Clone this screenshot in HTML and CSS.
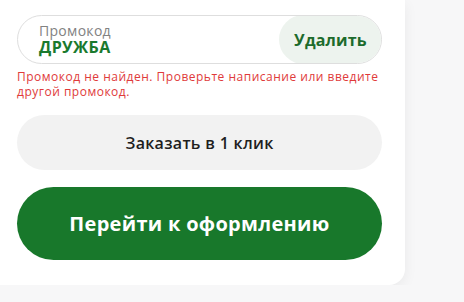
FILE: index.html
```html
<!DOCTYPE html>
<html lang="ru">
  <head>
    <meta charset="UTF-8" />
    <meta name="viewport" content="width=device-width, initial-scale=1.0" />
    <title>Корзина</title>
    <link rel="stylesheet" href="styles.css">
  </head>
  <body>
    <div class="cart-summary">
      <div class="promo">
        <div class="promo-field">
          <span class="promo-label">Промокод</span>
          <span class="promo-value">ДРУЖБА</span>
        </div>
        <button class="promo-remove" type="button">Удалить</button>
      </div>
      <p class="promo-error">Промокод не найден. Проверьте написание или введите другой промокод.</p>
      <button class="btn btn-quick" type="button">Заказать в 1 клик</button>
      <button class="btn btn-checkout" type="button">Перейти к оформлению</button>
    </div>
  </body>
</html>
```

FILE: styles.css
```css
body {
  margin: 0;
  font-family: "Open Sans", "Noto Sans", sans-serif;
  background: #f7f7f8;
}
.cart-summary {
  width: 365px;
  padding: 15px 23px 25px 17px;
  background: #fff;
  border-bottom-right-radius: 16px;
  box-shadow: 0 4px 14px rgba(0, 0, 0, 0.06);
}
.promo {
  display: flex;
  height: 49px;
  box-sizing: border-box;
  border: 1px solid #dedede;
  border-radius: 25px;
  overflow: hidden;
}
.promo-field {
  flex: 1;
  display: flex;
  flex-direction: column;
  justify-content: center;
  padding-left: 21px;
  padding-bottom: 1px;
}
.promo-label {
  font-size: 14px;
  line-height: 17px;
  letter-spacing: 0.3px;
  color: #828282;
}
.promo-value {
  font-size: 16px;
  line-height: 17px;
  letter-spacing: 0.4px;
  font-weight: 700;
  color: #1a7a2e;
}
.promo-remove {
  width: 103px;
  margin: -1px -1px -1px 0;
  border: none;
  border-radius: 25px;
  background: #edf3ee;
  color: #1d6b2c;
  font-family: inherit;
  font-size: 16px;
  letter-spacing: 0.2px;
  font-weight: 700;
}
.promo-error {
  margin: 5px 0 0;
  font-size: 12px;
  line-height: 15px;
  letter-spacing: 0.5px;
  color: #e03a3a;
}
.btn {
  display: block;
  width: 100%;
  border: none;
  border-radius: 30px;
  font-family: inherit;
  cursor: pointer;
}
.btn-quick {
  height: 55px;
  margin-top: 16px;
  background: #f2f2f2;
  color: #1e1e1e;
  font-size: 16px;
  letter-spacing: 0.3px;
  font-weight: 600;
}
.btn-checkout {
  height: 73px;
  margin-top: 17px;
  border-radius: 37px;
  background: #18782b;
  color: #fff;
  font-size: 20px;
  letter-spacing: 0.3px;
  font-weight: 700;
}
```
